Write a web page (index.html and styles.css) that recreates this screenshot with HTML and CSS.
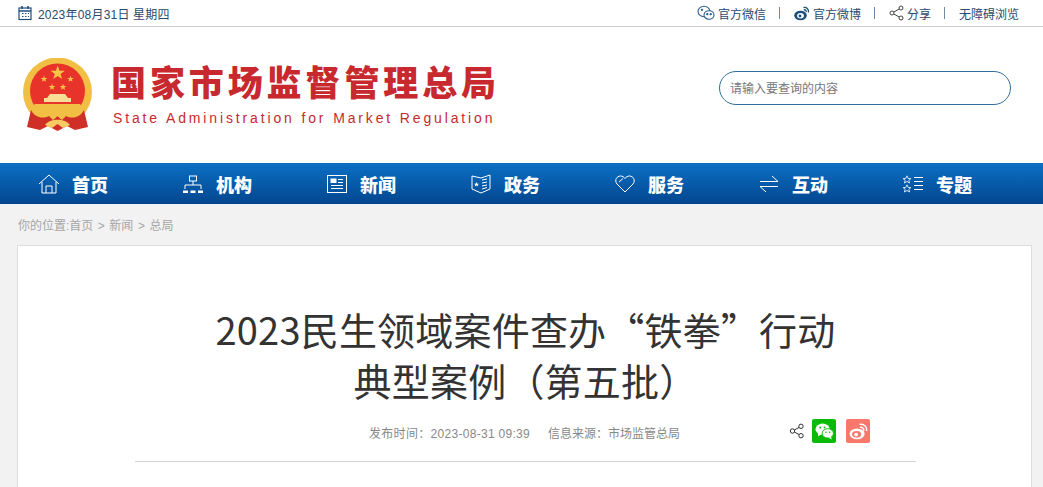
FILE: index.html
```html
<!DOCTYPE html>
<html lang="zh-CN">
<head>
  <meta charset="utf-8">
  <title>2023民生领域案件查办“铁拳”行动典型案例&#xFF08;第五批&#xFF09;</title>
  <link rel="stylesheet" href="styles.css">
</head>
<body>
  <div class="topbar">
    <div class="date">
      <svg class="ico-date" width="16" height="16" viewBox="0 0 16 16" fill="none" stroke="#1d4f7c" stroke-width="1.2">
        <rect x="2" y="3" width="12" height="11.5"/>
        <path d="M2 6H14M5 1V4M11 1V4" stroke-width="1.6"/>
        <path d="M5 8.500H6.500M8 8.500H9.500M11 8.500H12M5 11.500H6.500M8 11.500H9.500M11 11.500H12" stroke-width="1.200"/>
      </svg>
      <span>2023年08月31日 星期四</span>
    </div>
    <div class="toplinks">
      <a class="toplink">
        <svg width="18" height="16" viewBox="0 0 18 16" fill="none" stroke="#2a5d8c" stroke-width="1.100">
          <ellipse cx="7" cy="6.500" rx="6" ry="5.200"/>
          <ellipse cx="12" cy="10" rx="5" ry="4.300" fill="#fff"/>
          <circle cx="10.300" cy="9.200" r=".6" fill="#2a5d8c"/>
          <circle cx="13.700" cy="9.200" r=".6" fill="#2a5d8c"/>
          <circle cx="5" cy="4.800" r=".6" fill="#2a5d8c"/>
        </svg>
        官方微信
      </a>
      <i class="sep"></i>
      <a class="toplink">
        <svg width="16" height="15" viewBox="0 0 16 15">
          <ellipse cx="6.500" cy="9.500" rx="6.300" ry="4.800" fill="#1d4f7c"/>
          <ellipse cx="6.500" cy="9.800" rx="3.400" ry="2.700" fill="#fff"/>
          <circle cx="6" cy="10" r="1.400" fill="#1d4f7c"/>
          <path d="M9.500 1.500C12.500 .8 15 3 14.500 6.500M9.800 3.800C11.300 3.500 12.500 4.500 12.300 6" fill="none" stroke="#1d4f7c" stroke-width="1.300"/>
        </svg>
        官方微博
      </a>
      <i class="sep"></i>
      <a class="toplink">
        <svg width="15" height="16" viewBox="0 0 15 16" fill="none" stroke="#444" stroke-width="1">
          <circle cx="3" cy="8" r="2"/>
          <circle cx="12" cy="3" r="2"/>
          <circle cx="12" cy="13" r="2"/>
          <path d="M4.800 7L10.200 4M4.800 9L10.200 12"/>
        </svg>
        分享
      </a>
      <i class="sep"></i>
      <a class="toplink">无障碍浏览</a>
    </div>
  </div>

  <div class="header">
    <div class="logo">
      <svg class="emblem" width="70" height="75" viewBox="0 0 70 75">
        <defs>
          <path id="star" d="M0 -1L.24 -.31H.95L.38 .12L.59 .81L0 .4L-.59 .81L-.38 .12L-.95 -.31H-.24Z"/>
        </defs>
        <circle cx="34.500" cy="34" r="34.500" fill="#f2bf45"/>
        <circle cx="34.500" cy="33" r="27.500" fill="#e8332a"/>
        <g fill="#f6c544">
          <use href="#star" transform="translate(34.700 15) scale(7.500)"/>
          <use href="#star" transform="translate(21 21) scale(3.500)"/>
          <use href="#star" transform="translate(47.500 21) scale(3.500)"/>
          <use href="#star" transform="translate(29 29) scale(3.500)"/>
          <use href="#star" transform="translate(40 29) scale(3.500)"/>
        </g>
        <path d="M27 36H42L45 40H48V44H21V40H24Z" fill="#f9dc95"/>
        <path d="M12 46H57L60 50C54 60 44 63 34.500 63C25 63 15 60 9 50Z" fill="#f2bf45"/>
        <path d="M8 52C12 60 20 61 26 58L30 62L34.500 58L39 62L43 58C49 61 57 60 61 52L65 69L52 72L44 68L34.500 73L25 68L17 72L4 69Z" fill="#cf2f27"/>
        <path d="M22 67C27 60 42 60 47 67L40 70L34.500 66L29 70Z" fill="#f5cb62"/>
        <path d="M27 59L34.500 54L42 59L38 61L34.500 58L31 61Z" fill="#f2bf45"/>
      </svg>
      <div class="logo-text">
        <div class="logo-cn">国家市场监督管理总局</div>
        <div class="logo-en">State Administration for Market Regulation</div>
      </div>
    </div>
    <div class="search">请输入要查询的内容</div>
  </div>

  <div class="nav">
    <a class="nav-item">
      <svg width="22" height="20" viewBox="0 0 22 20" fill="none" stroke="#fff" stroke-width="1">
        <path d="M1 10L11 1L21 10M4 8V19H18V8M8 19V12H14V19"/>
      </svg>
      首页
    </a>
    <a class="nav-item">
      <svg width="20" height="18" viewBox="0 0 20 18" fill="none" stroke="#fff" stroke-width="1">
        <rect x="6.500" y="1" width="7" height="5"/>
        <path d="M10 6V10M2 14V10H18V14"/>
        <path d="M0 15.500H5V18H0ZM7.500 15.500H12.500V18H7.500ZM15 15.500H20V18H15Z" fill="#fff" stroke="none"/>
      </svg>
      机构
    </a>
    <a class="nav-item">
      <svg width="20" height="18" viewBox="0 0 20 18" fill="none" stroke="#fff" stroke-width="1">
        <rect x=".5" y=".5" width="19" height="17"/>
        <rect x="4" y="4" width="5" height="3.500" fill="#fff"/>
        <path d="M11 4.500H16M11 7.500H16M4 10.500H16M4 13.500H16"/>
      </svg>
      新闻
    </a>
    <a class="nav-item">
      <svg width="20" height="20" viewBox="0 0 20 20" fill="none" stroke="#fff" stroke-width="1">
        <path d="M1 2L10 4L19 1V15L10 19L1 15Z"/>
        <path d="M5.500 8L6.300 9.700H8L6.700 10.900L7.200 12.600L5.500 11.600L3.800 12.600L4.300 10.900L3 9.700H4.700Z" fill="#fff" stroke="none"/>
        <path d="M11 6L16 5M11 9L16 8M11 12L16 11M11 15L16 13.500"/>
      </svg>
      政务
    </a>
    <a class="nav-item">
      <svg width="20" height="18" viewBox="0 0 20 18" fill="none" stroke="#fff" stroke-width="1">
        <path d="M10 17L2 9C-1 5 2 1 5.500 1C7.500 1 9 2 10 3.500C11 2 12.500 1 14.500 1C18 1 21 5 18 9Z"/>
        <path d="M4 7L8 3.500"/>
      </svg>
      服务
    </a>
    <a class="nav-item">
      <svg width="20" height="18" viewBox="0 0 20 18" fill="none" stroke="#fff" stroke-width="1">
        <path d="M1 6.500H19L13 1M19 11.500H1L7 17"/>
      </svg>
      互动
    </a>
    <a class="nav-item">
      <svg width="22" height="18" viewBox="0 0 22 18" fill="none" stroke="#cfe3f7" stroke-width="1">
        <path d="M5 .8L6.200 3.500H9L6.800 5.300L7.600 8L5 6.500L2.400 8L3.200 5.300L1 3.500H3.800Z"/>
        <path d="M5 9.800L6.200 12.500H9L6.800 14.300L7.600 17L5 15.500L2.400 17L3.200 14.300L1 12.500H3.800Z"/>
        <path d="M12 2.500H21M12 6.500H21M12 10.500H21M12 14.500H21" stroke="#fff"/>
      </svg>
      专题
    </a>
  </div>

  <div class="crumb">你的位置:首页<em>&gt;</em>新闻<em>&gt;</em>总局</div>

  <div class="card">
    <h1 class="title">2023民生领域案件查办“铁拳”行动<br>典型案例&#xFF08;第五批&#xFF09;</h1>
    <div class="meta">
      <div class="meta-text">
        <span class="meta-date">发布时间&#xFF1A;2023-08-31 09:39</span>
        <span>信息来源&#xFF1A;市场监管总局</span>
      </div>
      <div class="shares">
        <svg width="16" height="16" viewBox="0 0 16 16" fill="none" stroke="#333" stroke-width="1">
          <circle cx="3.500" cy="8" r="2.200"/>
          <circle cx="12" cy="3.300" r="2.200"/>
          <circle cx="12" cy="12.700" r="2.200"/>
          <path d="M5.400 7L10.100 4.400M5.400 9L10.100 11.600"/>
        </svg>
        <span class="share-btn wx">
          <svg width="20" height="18" viewBox="0 0 20 18">
            <ellipse cx="8" cy="6.500" rx="7.500" ry="6" fill="#fff"/>
            <path d="M3.500 10L3 14L7 12Z" fill="#fff"/>
            <ellipse cx="13.500" cy="11" rx="6" ry="5" fill="#fff" stroke="#09bb07" stroke-width="1"/>
            <path d="M17 14.500L17.500 17.500L14.500 15.500Z" fill="#fff"/>
            <circle cx="5.500" cy="4.800" r="1" fill="#09bb07"/>
            <circle cx="10" cy="4.800" r="1" fill="#09bb07"/>
            <circle cx="11.500" cy="9.800" r=".8" fill="#09bb07"/>
            <circle cx="15.500" cy="9.800" r=".8" fill="#09bb07"/>
          </svg>
        </span>
        <span class="share-btn wb">
          <svg width="20" height="18" viewBox="0 0 20 18">
            <ellipse cx="8.500" cy="11.500" rx="8" ry="5.800" fill="#fff"/>
            <ellipse cx="8" cy="12" rx="4.800" ry="3.500" fill="#f8796b"/>
            <circle cx="7.500" cy="12.300" r="2" fill="#fff"/>
            <path d="M11 1.500C15.500 .5 19.500 4 18.500 8.500M11.500 4.500C14 4 16 6 15.500 8.300" fill="none" stroke="#fff" stroke-width="1.500"/>
          </svg>
        </span>
      </div>
    </div>
    <div class="rule"></div>
  </div>
</body>
</html>
```

FILE: styles.css
```css
html, body {
  margin: 0;
  padding: 0;
}

body {
  background: #f2f2f3;
  font-family: "Liberation Sans", "Noto Sans CJK SC", sans-serif;
  height: 487px;
  overflow: hidden;
}

/* top bar */
.topbar {
  height: 26px;
  background: #fff;
  border-bottom: 1px solid #ccc;
  display: flex;
  justify-content: space-between;
  align-items: center;
  padding: 0 24px 0 17px;
  font-size: 12px;
  color: #2a4a6b;
}

.date {
  display: flex;
  align-items: center;
  gap: 5px;
  letter-spacing: .2px;
}

.toplinks {
  display: flex;
  align-items: center;
}

.toplink {
  display: flex;
  align-items: center;
  gap: 3px;
}

.sep {
  width: 1px;
  height: 12px;
  background: #6f8aa5;
  margin: 0 14px 0 13px;
}

/* logo and search */
.header {
  height: 136px;
  background: #fff;
  display: flex;
  justify-content: space-between;
  align-items: center;
  padding: 0 32px 0 23px;
}

.logo {
  display: flex;
  align-items: center;
  gap: 18px;
}

.logo-cn {
  font-size: 35px;
  line-height: 40px;
  font-weight: 900;
  letter-spacing: 3.9px;
  color: #c8292e;
  white-space: nowrap;
}

.logo-en {
  font-size: 14px;
  line-height: 18px;
  letter-spacing: 2.86px;
  color: #c8292e;
  margin: 5px 0 0 2px;
  white-space: nowrap;
}

.search {
  width: 280px;
  height: 32px;
  line-height: 35px;
  border: 1px solid #2f6f9f;
  border-radius: 17px;
  padding-left: 10px;
  font-size: 12px;
  color: #777;
  margin-top: -15px;
}

/* nav */
.nav {
  height: 41px;
  background: linear-gradient(#0b70c4, #03468f);
  display: flex;
  padding-left: 38px;
  overflow: hidden;
}

.nav-item {
  flex: none;
  width: 144px;
  display: flex;
  align-items: center;
  color: #fff;
  font-size: 18px;
  font-weight: 900;
}

.nav-item svg {
  width: 22px;
  margin-right: 12px;
}

/* breadcrumb */
.crumb {
  height: 41px;
  line-height: 44px;
  padding-left: 18px;
  font-size: 12px;
  color: #a6a6a6;
}

.crumb em {
  font-style: normal;
  margin: 0 4.500px;
}

/* article card */
.card {
  margin: 0 11px 0 17px;
  height: 184px;
  background: #fff;
  border: 1px solid #ddd;
  border-bottom: 0;
  padding: 57px 115px 0 117px;
}

.title {
  margin: 0;
  font-family: "Noto Sans CJK SC", sans-serif;
  font-size: 38px;
  line-height: 51px;
  font-weight: 400;
  letter-spacing: .2px;
  text-align: center;
  color: #333;
}

.meta {
  display: flex;
  justify-content: space-between;
  align-items: center;
  height: 28px;
  margin-top: 13px;
  padding-left: 234px;
  padding-right: 46px;
  font-size: 12px;
  color: #888;
}

.meta-text {
  display: flex;
  gap: 18px;
}

.meta-date {
  letter-spacing: .3px;
}

.shares {
  display: flex;
  align-items: center;
  gap: 7px;
  margin-top: -2px;
}

.share-btn {
  width: 24px;
  height: 24px;
  border-radius: 2px;
  display: flex;
  align-items: center;
  justify-content: center;
}

.share-btn svg {
  width: 19px;
  height: 17px;
}

.wx {
  background: #09bb07;
}

.wb {
  background: #f8796b;
  margin-left: 3px;
}

.rule {
  height: 1px;
  background: #d5d5d5;
  margin-top: 15px;
}
```
